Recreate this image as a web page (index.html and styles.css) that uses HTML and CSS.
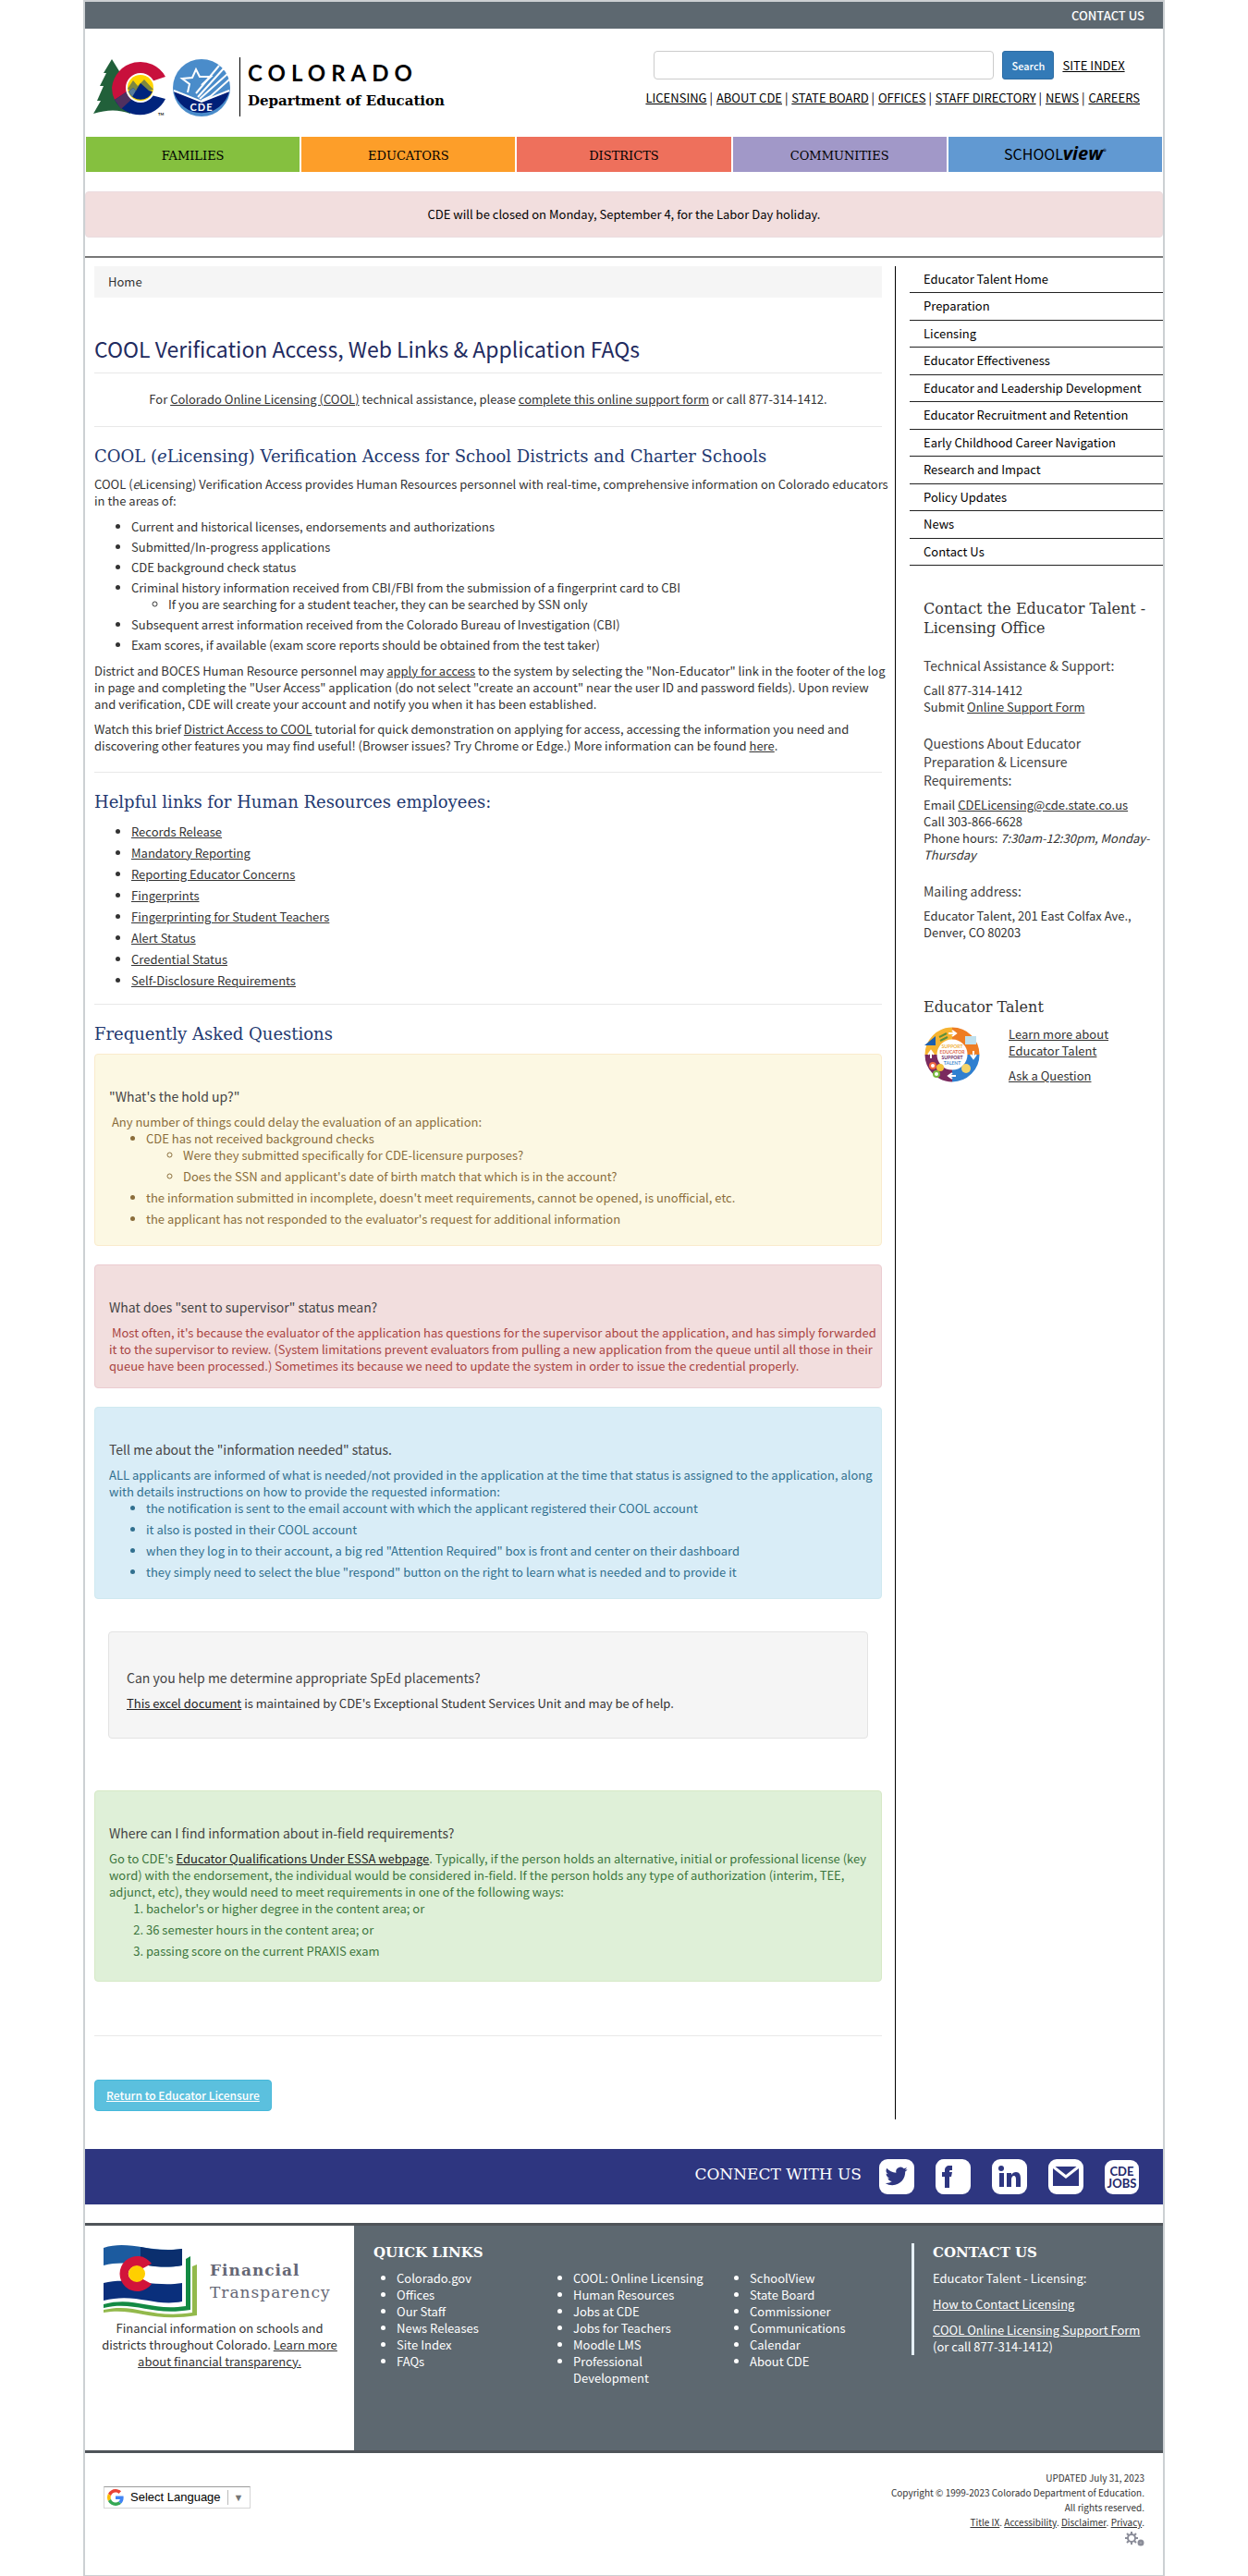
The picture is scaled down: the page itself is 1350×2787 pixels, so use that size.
FILE: index.html
```html
<!DOCTYPE html>
<html lang="en">
<head>
<meta charset="utf-8">
<meta name="viewport" content="width=device-width, initial-scale=1">
<title>COOL Verification Access, Web Links &amp; Application FAQs</title>
<link rel="stylesheet" href="styles.css">
</head>
<body>
<div class="page">
  <div class="topbar"><a href="#">CONTACT US</a></div>

  <header class="header">
    <a class="brand" href="#" aria-label="Colorado Department of Education">
      <svg class="brand-mark" width="158" height="66" viewBox="0 0 158 66" aria-hidden="true">
        <path d="M20 2 L11 17 L14 17 L7 31 L11 31 L4 47 L8 47 L0 61 Q22 54 40 61 L40 15 L28 15 Z" fill="#21603a"/>
        <path d="M78 21 A31 31 0 0 0 20 33 A31 31 0 0 0 23 46 L40 38 A16 16 0 0 1 63 26 Z" fill="#c8103c"/>
        <path d="M78 45 A31 31 0 0 1 23 46 L38 36 A16 16 0 0 0 63 41 Z" fill="#00247d"/>
        <path d="M23 46 L38 36 L42 45 L30 56 Z" fill="#50305f"/>
        <circle cx="51" cy="33" r="16" fill="#fff"/>
        <circle cx="51" cy="33" r="14" fill="#ffd400"/>
        <path d="M37 34 L43 25 L48 31 L55 24 L65 35 L60 36 L50 33 L42 38 Z" fill="#7d8740"/>
        <path d="M38 37 L43 33 L46 36 L51 28 L60 36 L64 37 A14 14 0 0 1 38 37 Z" fill="#00247d"/>
        <path d="M38 37 L43 33 L46 36 L42 43 Z" fill="#587c9a"/>
        <circle cx="117" cy="33" r="31" fill="#4a8cca"/>
        <path d="M87 37 L117 47 L147 37 A31 31 0 0 1 87 37 Z" fill="#001f78"/>
        <path d="M87 36 L117 48 L147 36" fill="none" stroke="#fff" stroke-width="2"/>
        <path d="M117 47 L127 42 L147 24 M115 45 L145 18 M113 43 L141 12 M111 39 L136 9" fill="none" stroke="#fff" stroke-width="2"/>
        <path d="M102 38 L104 29 L96 23 L107 22 L111 13 L115 21 L127 21 L117 30" fill="none" stroke="#fff" stroke-width="2"/>
        <text x="117" y="58" class="mark-text">CDE</text>
        <text x="70" y="63" class="mark-tm">TM</text>
      </svg>
      <span class="brand-name"><span class="brand-state">COLORADO</span><span class="brand-dept">Department of Education</span></span>
    </a>
    <div class="tools">
      <form class="search">
        <input class="search-box" type="text" aria-label="Search this site">
        <button class="search-btn" type="button">Search</button>
        <a href="#">SITE INDEX</a>
      </form>
      <nav class="quicknav" aria-label="Site">
        <a href="#">LICENSING</a> | <a href="#">ABOUT CDE</a> | <a href="#">STATE BOARD</a> | <a href="#">OFFICES</a> | <a href="#">STAFF DIRECTORY</a> | <a href="#">NEWS</a> | <a href="#">CAREERS</a>
      </nav>
    </div>
  </header>

  <nav class="mainnav" aria-label="Main">
    <a class="families" href="#">FAMILIES</a>
    <a class="educators" href="#">EDUCATORS</a>
    <a class="districts" href="#">DISTRICTS</a>
    <a class="communities" href="#">COMMUNITIES</a>
    <a class="schoolview" href="#"><span>SCHOOL</span><b>view</b><sup>®</sup></a>
  </nav>

  <div class="notice">CDE will be closed on Monday, September 4, for the Labor Day holiday.</div>

  <div class="columns">
    <main class="content">
      <div class="breadcrumb"><a href="#">Home</a></div>
      <h1>COOL Verification Access, Web Links &amp; Application FAQs</h1>
      <hr>
      <p class="support">For <a href="#">Colorado Online Licensing (COOL)</a> technical assistance, please <a href="#">complete this online support form</a> or call 877-314-1412.</p>
      <hr>
      <h2>COOL (<em>e</em>Licensing) Verification Access for School Districts and Charter Schools</h2>
      <p class="lead">COOL (<em>e</em>Licensing) Verification Access provides Human Resources personnel with real-time, comprehensive information on Colorado educators in the areas of:</p>
      <ul class="bullets">
        <li>Current and historical licenses, endorsements and authorizations</li>
        <li>Submitted/In-progress applications</li>
        <li>CDE background check status</li>
        <li>Criminal history information received from CBI/FBI from the submission of a fingerprint card to CBI
          <ul><li>If you are searching for a student teacher, they can be searched by SSN only</li></ul>
        </li>
        <li>Subsequent arrest information received from the Colorado Bureau of Investigation (CBI)</li>
        <li>Exam scores, if available (exam score reports should be obtained from the test taker)</li>
      </ul>
      <p class="lead">District and BOCES Human Resource personnel may <a href="#">apply for access</a> to the system by selecting the "Non-Educator" link in the footer of the log in page and completing the "User Access" application (do not select "create an account" near the user ID and password fields). Upon review and verification, CDE will create your account and notify you when it has been established.</p>
      <p class="lead">Watch this brief <a href="#">District Access to COOL</a> tutorial for quick demonstration on applying for access, accessing the information you need and discovering other features you may find useful! (Browser issues? Try Chrome or Edge.) More information can be found <a href="#">here</a>.</p>
      <hr>
      <h2>Helpful links for Human Resources employees:</h2>
      <ul class="bullets loose">
        <li><a href="#">Records Release</a></li>
        <li><a href="#">Mandatory Reporting</a></li>
        <li><a href="#">Reporting Educator Concerns</a></li>
        <li><a href="#">Fingerprints</a></li>
        <li><a href="#">Fingerprinting for Student Teachers</a></li>
        <li><a href="#">Alert Status</a></li>
        <li><a href="#">Credential Status</a></li>
        <li><a href="#">Self-Disclosure Requirements</a></li>
      </ul>
      <hr>
      <h2>Frequently Asked Questions</h2>

      <section class="panel warning">
        <h4>"What's the hold up?"</h4>
        <p>&nbsp;Any number of things could delay the evaluation of an application:</p>
        <ul class="bullets loose">
          <li>CDE has not received background checks
            <ul>
              <li>Were they submitted specifically for CDE-licensure purposes?</li>
              <li>Does the SSN and applicant's date of birth match that which is in the account?</li>
            </ul>
          </li>
          <li>the information submitted in incomplete, doesn't meet requirements, cannot be opened, is unofficial, etc.</li>
          <li>the applicant has not responded to the evaluator's request for additional information</li>
        </ul>
      </section>

      <section class="panel danger">
        <h4>What does "sent to supervisor" status mean?</h4>
        <p>&nbsp;Most often, it's because the evaluator of the application has questions for the supervisor about the application, and has simply forwarded it to the supervisor to review. (System limitations prevent evaluators from pulling a new application from the queue until all those in their queue have been processed.) Sometimes its because we need to update the system in order to issue the credential properly.</p>
      </section>

      <section class="panel info">
        <h4>Tell me about the "information needed" status.</h4>
        <p>ALL applicants are informed of what is needed/not provided in the application at the time that status is assigned to the application, along with details instructions on how to provide the requested information:</p>
        <ul class="bullets loose">
          <li>the notification is sent to the email account with which the applicant registered their COOL account</li>
          <li>it also is posted in their COOL account</li>
          <li>when they log in to their account, a big red "Attention Required" box is front and center on their dashboard</li>
          <li>they simply need to select the blue "respond" button on the right to learn what is needed and to provide it</li>
        </ul>
      </section>

      <section class="panel well">
        <h4>Can you help me determine appropriate SpEd placements?</h4>
        <p><a href="#">This excel document</a> is maintained by CDE's Exceptional Student Services Unit and may be of help.</p>
      </section>

      <section class="panel success">
        <h4>Where can I find information about in-field requirements?</h4>
        <p>Go to CDE's <a href="#">Educator Qualifications Under ESSA webpage</a>. Typically, if the person holds an alternative, initial or professional license (key word) with the endorsement, the individual would be considered in-field. If the person holds any type of authorization (interim, TEE, adjunct, etc), they would need to meet requirements in one of the following ways:</p>
        <ol class="bullets loose">
          <li>bachelor's or higher degree in the content area; or</li>
          <li>36 semester hours in the content area; or</li>
          <li>passing score on the current PRAXIS exam</li>
        </ol>
      </section>

      <hr>
      <a class="return" href="#">Return to Educator Licensure</a>
    </main>

    <aside class="sidebar">
      <ul class="sidenav">
        <li><a href="#">Educator Talent Home</a></li>
        <li><a href="#">Preparation</a></li>
        <li><a href="#">Licensing</a></li>
        <li><a href="#">Educator Effectiveness</a></li>
        <li><a href="#">Educator and Leadership Development</a></li>
        <li><a href="#">Educator Recruitment and Retention</a></li>
        <li><a href="#">Early Childhood Career Navigation</a></li>
        <li><a href="#">Research and Impact</a></li>
        <li><a href="#">Policy Updates</a></li>
        <li><a href="#">News</a></li>
        <li><a href="#">Contact Us</a></li>
      </ul>
      <div class="contact">
        <h3>Contact the Educator Talent - Licensing Office</h3>
        <h4>Technical Assistance &amp; Support:</h4>
        <p>Call 877-314-1412<br>Submit <a href="#">Online Support Form</a></p>
        <h4>Questions About Educator Preparation &amp; Licensure Requirements:</h4>
        <p>Email <a href="#">CDELicensing@cde.state.co.us</a><br>Call 303-866-6628<br>Phone hours: <em>7:30am-12:30pm, Monday-Thursday</em></p>
        <h4>Mailing address:</h4>
        <p>Educator Talent, 201 East Colfax Ave., Denver, CO 80203</p>
        <h3 class="talent-title">Educator Talent</h3>
        <div class="talent">
          <svg width="62" height="62" viewBox="0 0 62 62" aria-hidden="true">
            <g fill="none" stroke-width="13">
              <path d="M31 8 A23 23 0 0 1 54 31" stroke="#ee7d23"/>
              <path d="M54 31 A23 23 0 0 1 31 54" stroke="#2f7fd0"/>
              <path d="M31 54 A23 23 0 0 1 8 31" stroke="#7a2a5e"/>
              <path d="M8 31 A23 23 0 0 1 31 8" stroke="#f6b330"/>
            </g>
            <path d="M1 21 L13 11 L13 21 Z" fill="#1c5fae"/>
            <rect x="45" y="11" width="12" height="9" fill="#bfe0ee"/>
            <path d="M17 12 L25 8 M18 16 L26 12" stroke="#5a8f3c" stroke-width="2"/>
            <circle cx="10" cy="43" r="4" fill="#f1673f"/><circle cx="10" cy="43" r="2" fill="#fff"/>
            <circle cx="14" cy="52" r="4" fill="#79b93f"/><circle cx="14" cy="52" r="2" fill="#fff"/>
            <circle cx="18" cy="45" r="4" fill="#f3c23a"/><circle cx="46" cy="46" r="5" fill="#f3d469"/>
            <path d="M27 8 h7 M31 5 l4 3 l-4 3 M54 27 v7 M51 31 l3 4 l3 -4 M27 54 h8 M31 51 l-4 3 l4 3 M8 28 v7 M5 31 l3 -4 l3 4" fill="none" stroke="#fff" stroke-width="2"/>
            <g text-anchor="middle" class="ring-text">
              <text x="31" y="24" fill="#f0b040">SUPPORT</text><text x="31" y="30" fill="#dc6a4c">EDUCATOR</text>
              <text x="31" y="36" fill="#6d2c68">SUPPORT</text><text x="31" y="42" fill="#4d8fd0">TALENT</text>
            </g>
          </svg>
          <div><p><a href="#">Learn more about Educator Talent</a></p><p><a href="#">Ask a Question</a></p></div>
        </div>
      </div>
    </aside>
  </div>

  <div class="connect">
    <h2>CONNECT WITH US</h2>
    <a href="#" aria-label="Twitter"><svg width="38" height="38" viewBox="0 0 38 38"><rect width="38" height="38" rx="9" fill="#fff"/><path fill="#2e3680" transform="translate(7 6)" d="M23.6 5c-.9.4-1.8.6-2.8.8 1-.6 1.8-1.6 2.1-2.7-.9.6-2 1-3.1 1.2a4.9 4.9 0 0 0-8.4 4.5C7.4 8.600 3.700 6.600 1.300 3.700a4.900 4.900 0 0 0 1.500 6.500c-.8 0-1.600-.2-2.200-.6v.1c0 2.400 1.700 4.300 3.900 4.800-.7.200-1.500.2-2.200.1.600 2 2.400 3.400 4.600 3.400A9.900 9.900 0 0 1-.3 20 14 14 0 0 0 7.200 22.200c9.100 0 14.300-7.700 14-14.600.9-.7 1.800-1.600 2.400-2.600z"/></svg></a>
    <a href="#" aria-label="Facebook"><svg width="38" height="38" viewBox="0 0 38 38"><rect width="38" height="38" rx="9" fill="#fff"/><path fill="#2e3680" d="M10 31V19H7v-5h3v-2c0-3 2-5 5-5h3v5h-2c-1 0-1 1-1 1v1h3l-1 5h-2v12z"/></svg></a>
    <a href="#" aria-label="LinkedIn"><svg width="38" height="38" viewBox="0 0 38 38"><rect width="38" height="38" rx="9" fill="#fff"/><g fill="#2e3680"><circle cx="10" cy="10" r="3"/><path d="M8 15h5v15H8zM16 15h5v2c1-2 3-3 5-3 4 0 5 3 5 7v9h-5v-8c0-3-1-4-2-4-2 0-3 2-3 4v8h-5z"/></g></svg></a>
    <a href="#" aria-label="Email"><svg width="38" height="38" viewBox="0 0 38 38"><rect width="38" height="38" rx="9" fill="#fff"/><path fill="#2e3680" d="M5 8h28v21H5z"/><path d="M5 8l14 11L33 8" fill="none" stroke="#fff" stroke-width="3"/></svg></a>
    <a class="jobs" href="#">CDE<br>JOBS</a>
  </div>

  <footer class="footer">
    <section class="finance">
      <a class="finance-logo" href="#" aria-label="Financial Transparency">
        <svg width="102" height="80" viewBox="0 0 102 80" aria-hidden="true">
          <path d="M0 4 C28 -5 50 10 85 5 V64 C55 68 35 54 0 62 Z" fill="#fff"/>
          <path d="M0 4 C28 -5 50 10 85 5 V23 C55 29 30 15 0 23 Z" fill="#1c5b9f"/>
          <path d="M40 3 C58 7 70 7 85 5 V23 C65 26 50 24 40 21 Z" fill="#0b2f6e"/>
          <path d="M0 42 C28 35 55 47 85 42 V62 C55 68 35 52 0 61 Z" fill="#0a2f7c"/>
          <path d="M52 21 A19 19 0 1 0 52 43 L41 37 A8 8 0 1 1 41 27 Z" fill="#d2143a"/>
          <circle cx="36" cy="32" r="9" fill="#ffcf00"/>
          <path d="M0 65 C35 56 50 73 89 67 V16 L94 13 V71 C50 78 35 61 0 69 Z" fill="#138a43"/>
          <path d="M0 71 C35 63 50 81 96 74 V24 L101 22 V77 C50 85 35 68 0 74 Z" fill="#93b94c"/>
        </svg>
        <span class="finance-name"><b>Financial</b><span>Transparency</span></span>
      </a>
      <p>Financial information on schools and districts throughout Colorado. <a href="#">Learn more about financial transparency.</a></p>
    </section>
    <section class="quick">
      <h2>QUICK LINKS</h2>
      <div class="quick-cols">
        <ul><li><a href="#">Colorado.gov</a></li><li><a href="#">Offices</a></li><li><a href="#">Our Staff</a></li><li><a href="#">News Releases</a></li><li><a href="#">Site Index</a></li><li><a href="#">FAQs</a></li></ul>
        <ul><li><a href="#">COOL: Online Licensing</a></li><li><a href="#">Human Resources</a></li><li><a href="#">Jobs at CDE</a></li><li><a href="#">Jobs for Teachers</a></li><li><a href="#">Moodle LMS</a></li><li><a href="#">Professional Development</a></li></ul>
        <ul><li><a href="#">SchoolView</a></li><li><a href="#">State Board</a></li><li><a href="#">Commissioner</a></li><li><a href="#">Communications</a></li><li><a href="#">Calendar</a></li><li><a href="#">About CDE</a></li></ul>
      </div>
    </section>
    <section class="footer-contact">
      <h2>CONTACT US</h2>
      <p>Educator Talent - Licensing:</p>
      <p><a href="#">How to Contact Licensing</a></p>
      <p><a href="#">COOL Online Licensing Support Form</a><br>(or call 877-314-1412)</p>
    </section>
  </footer>

  <div class="legal">
    <button class="language" type="button">
      <svg width="18" height="18" viewBox="0 0 48 48" aria-hidden="true"><path fill="#ea4335" d="M24 9.500c3.500 0 6.700 1.200 9.200 3.600l6.900-6.900C35.900 2.400 30.500 0 24 0 14.600 0 6.500 5.400 2.600 13.200l8 6.200C12.400 13.700 17.700 9.500 24 9.500z"/><path fill="#4285f4" d="M47 24.600c0-1.600-.2-3.100-.4-4.600H24v9h12.900c-.6 3-2.200 5.500-4.700 7.200l7.700 6C44.400 38 47 32 47 24.600z"/><path fill="#fbbc05" d="M10.500 28.600c-.5-1.500-.8-3-.8-4.600s.3-3.100.8-4.600l-8-6.200C.9 16.500 0 20.100 0 24s.9 7.500 2.600 10.800z"/><path fill="#34a853" d="M24 48c6.500 0 11.900-2.100 15.900-5.800l-7.700-6c-2.200 1.500-4.900 2.300-8.200 2.300-6.300 0-11.600-4.200-13.500-9.900l-8 6.200C6.500 42.600 14.600 48 24 48z"/></svg>
      <span>Select Language</span><span class="arrow">▼</span>
    </button>
    <div class="copyright">
      <p>UPDATED July 31, 2023</p>
      <p>Copyright © 1999-2023 Colorado Department of Education.</p>
      <p>All rights reserved.</p>
      <p><a href="#">Title IX</a>. <a href="#">Accessibility</a>. <a href="#">Disclaimer</a>. <a href="#">Privacy</a>.</p>
      <svg width="22" height="16" viewBox="0 0 22 16" aria-hidden="true"><g fill="none" stroke="#8b8d99"><circle cx="8" cy="7" r="4" stroke-width="2"/><path d="M8 0v3M8 11v3M1 7h3M12 7h3M3 2l2 2M11 10l2 2M13 2l-2 2M5 10l-2 2" stroke-width="2"/><circle cx="18" cy="12" r="2" stroke-width="3"/></g></svg>
    </div>
  </div>
</div>
</body>
</html>
```

FILE: styles.css
```css
* { box-sizing: border-box; }

body {
  margin: 0;
  background: #fff;
  color: #333;
  font: 13px/18px "Noto Sans CJK SC", "Noto Sans", sans-serif;
}

h1, h2, h3, h4, p, ul, ol { margin: 0; padding: 0; font-weight: 400; }
a { color: inherit; }
svg { display: block; flex: none; }
hr { margin: 0; border: 0; border-top: 1px solid #e8e8e8; }

.page {
  max-width: 1170px;
  margin: 0 auto;
  border: 2px solid #ccd0d3;
  border-bottom-width: 3px;
}

.topbar {
  padding: 6px 20px 5px;
  background: #5d6870;
  color: #fff;
  text-align: right;
  font-weight: 500;
}
.topbar a { text-decoration: none; }

/* Header */
.header {
  display: flex;
  justify-content: space-between;
  gap: 24px;
  padding: 24px 0 20px 9px;
}
.brand { display: flex; padding-top: 7px; color: #000; text-decoration: none; }
.mark-text { fill: #fff; font: 700 11px Lato, sans-serif; letter-spacing: 1px; text-anchor: middle; }
.mark-tm { fill: #000; font: 700 4px Lato, sans-serif; }
.brand-name {
  display: flex;
  flex-direction: column;
  gap: 6px;
  height: 64px;
  padding: 5px 0 0 8px;
  border-left: 1px solid #000;
}
.brand-state { font: 700 24px/24px Lato, sans-serif; letter-spacing: 6px; }
.brand-dept { font: 700 15px/24px "DejaVu Serif", serif; }
.tools { padding-right: 25px; color: #000; }
.search { display: flex; align-items: center; gap: 9px; padding-left: 9px; }
.search-box { width: 368px; height: 31px; border: 1px solid #ccc; border-radius: 4px; }
.search-btn {
  width: 56px;
  height: 31px;
  border: 1px solid #2e6da4;
  border-radius: 3px;
  background: #337ab7;
  color: #fff;
  font: 500 11px/18px "Noto Sans CJK SC", sans-serif;
}
.quicknav { margin-top: 11px; text-align: right; }
.quicknav a + a { margin-left: 1px; }

.mainnav { display: grid; grid-template-columns: repeat(5, 1fr); gap: 2px; padding: 0 1px; }
.mainnav a {
  height: 38px;
  color: #000;
  font: 13px/42px "DejaVu Serif", serif;
  text-align: center;
  text-decoration: none;
}
.mainnav .families { background: #85c03f; }
.mainnav .educators { background: #fd9e29; }
.mainnav .districts { background: #ee705c; }
.mainnav .communities { background: #a198c8; }
.mainnav .schoolview { background: #6199d2; font: 16px/36px "Noto Sans CJK SC", sans-serif; }
.schoolview b { font: italic 700 20px/36px "Open Sans", sans-serif; }
.schoolview sup { font-size: 8px; line-height: 8px; }

.notice {
  margin: 21px 0 20px;
  padding: 15px;
  border: 1px solid #ebdcdf;
  border-radius: 4px;
  background: #f2dede;
  color: #000;
  text-align: center;
}

/* Two-column area */
.columns { display: flex; gap: 14px; padding: 9px 0 32px; border-top: 2px solid #777; }
.content { flex: 1; min-width: 0; padding: 0 0 9px 10px; }
.breadcrumb { padding: 8px 15px; background: #f5f5f5; }
.breadcrumb a { text-decoration: none; }
h1 { margin: 40px 0 11px; color: #1f2b60; font-size: 23px; line-height: 30px; }
.support { margin: 19px 0 20px; text-align: center; }
.lead { margin-right: -8px; }
.content h2 { margin: 19px 0 8px; color: #22386f; font: 18px/26px "DejaVu Serif", serif; }
.lead + .lead { margin-top: 9px; }
.lead + hr { margin-top: 19px; }
.bullets { margin: 10px 0; padding-left: 40px; }
.bullets ul { padding-left: 40px; }
.bullets li { margin-bottom: 4px; }
.loose li { margin-bottom: 5px; }
.bullets li:has(ul) > ul > li:last-child { margin-bottom: 0; }
.bullets + hr { margin-top: 16px; }

.panel { margin-bottom: 20px; padding: 34px 5px 14px 15px; border: 1px solid; border-radius: 4px; }
.panel h4 { margin-bottom: 8px; color: #444; font-size: 14px; line-height: 22px; }
.panel .bullets { margin: 0; }
.panel a { color: #222; }
.warning { border-color: #faebcc; background: #fcf8e3; color: #8a6d3b; }
.danger { border-color: #ebccd1; background: #f2dede; color: #a94442; }
.info { border-color: #cfe9f0; background: #d9edf7; color: #31708f; }
.well { margin: 35px 15px 56px; padding: 38px 19px 28px; border-color: #e3e3e3; background: #f5f5f5; }
.success { padding-bottom: 18px; border-color: #d6e9c6; background: #dff0d8; color: #3c763d; }
.panel + hr { margin-top: 58px; }
.return {
  display: inline-block;
  margin-top: 47px;
  padding: 7px 12px;
  border: 1px solid #46b8da;
  border-radius: 4px;
  background: #5bc0de;
  color: #fff;
  font-size: 12px;
  font-weight: 500;
}

.sidebar { width: 290px; padding-left: 15px; border-left: 1px solid #000; }
.sidenav { list-style: none; color: #000; }
.sidenav li { padding: 5px 15px; border-bottom: 1px solid #222; }
.sidenav li:nth-child(even) { padding-bottom: 6px; }
.sidenav a { text-decoration: none; }
.contact { padding: 36px 8px 0 15px; }
.contact h3 { margin-bottom: 20px; font: 16px/21px "DejaVu Serif", serif; color: #333; }
.contact h4 { margin-bottom: 8px; padding-right: 16px; color: #444; font-size: 14px; line-height: 20px; }
.contact p + h4 { margin-top: 20px; }
.contact .talent-title { margin: 61px 0 10px; }
.talent { display: flex; gap: 30px; }
.talent p { margin-bottom: 9px; }
.ring-text { font: 700 5px Lato, sans-serif; }

/* Social bar */
.connect {
  display: flex;
  align-items: center;
  justify-content: flex-end;
  gap: 23px;
  height: 60px;
  padding-right: 26px;
  background: #2e3680;
  color: #fff;
}
.connect h2 { margin: 0 -4px 6px 0; font: 17px/24px "DejaVu Serif", serif; }
.jobs {
  width: 37px;
  height: 37px;
  padding-top: 6px;
  border-radius: 9px;
  background: #fff;
  color: #22286a;
  font: 700 13px/13px Lato, sans-serif;
  text-align: center;
  text-decoration: none;
}

/* Footer */
.footer {
  display: flex;
  min-height: 249px;
  margin-top: 20px;
  border: solid #4f5459;
  border-width: 3px 0;
  background: #5d6870;
  color: #fff;
  font-weight: 500;
}
.footer h2 { font: 700 15px/24px "DejaVu Serif", serif; margin-bottom: 7px; }
.finance { width: 291px; padding: 20px 20px 0; background: #fff; color: #333; font-weight: 400; text-align: center; }
.finance-logo { display: flex; gap: 13px; text-decoration: none; color: #656775; }
.finance-name { display: flex; flex-direction: column; padding-top: 16px; text-align: left; font: 17px/24px "DejaVu Serif", serif; letter-spacing: 1px; }
.finance > p { margin: 2px -8px 0; }
.quick { flex: 1; padding: 17px 0 0 21px; }
.quick-cols { display: grid; grid-template-columns: repeat(3, 191px); }
.quick ul { padding: 0 12px 0 25px; }
.quick a { text-decoration: none; }
.footer-contact { align-self: flex-start; width: 272px; margin-top: 19px; padding-left: 20px; border-left: 3px solid #e6f0f6; }
.footer-contact h2 { margin-top: -2px; }
.footer-contact p + p { margin-top: 10px; }

.legal { display: flex; justify-content: space-between; align-items: flex-start; padding: 19px 20px 31px; }
.language {
  display: flex;
  align-items: center;
  gap: 7px;
  height: 24px;
  margin-top: 17px;
  padding: 0 7px 0 3px;
  border: 1px solid #d5d5d5;
  border-top-color: #9b9b9b;
  background: #fff;
  color: #000;
  font: 13px/18px "Liberation Sans", sans-serif;
}
.arrow { padding-left: 6px; border-left: 1px solid #bbb; color: #767676; font-size: 11px; line-height: 16px; }
.copyright { font-size: 10px; line-height: 16px; text-align: right; }
.copyright svg { margin: 2px 0 0 auto; }
```
